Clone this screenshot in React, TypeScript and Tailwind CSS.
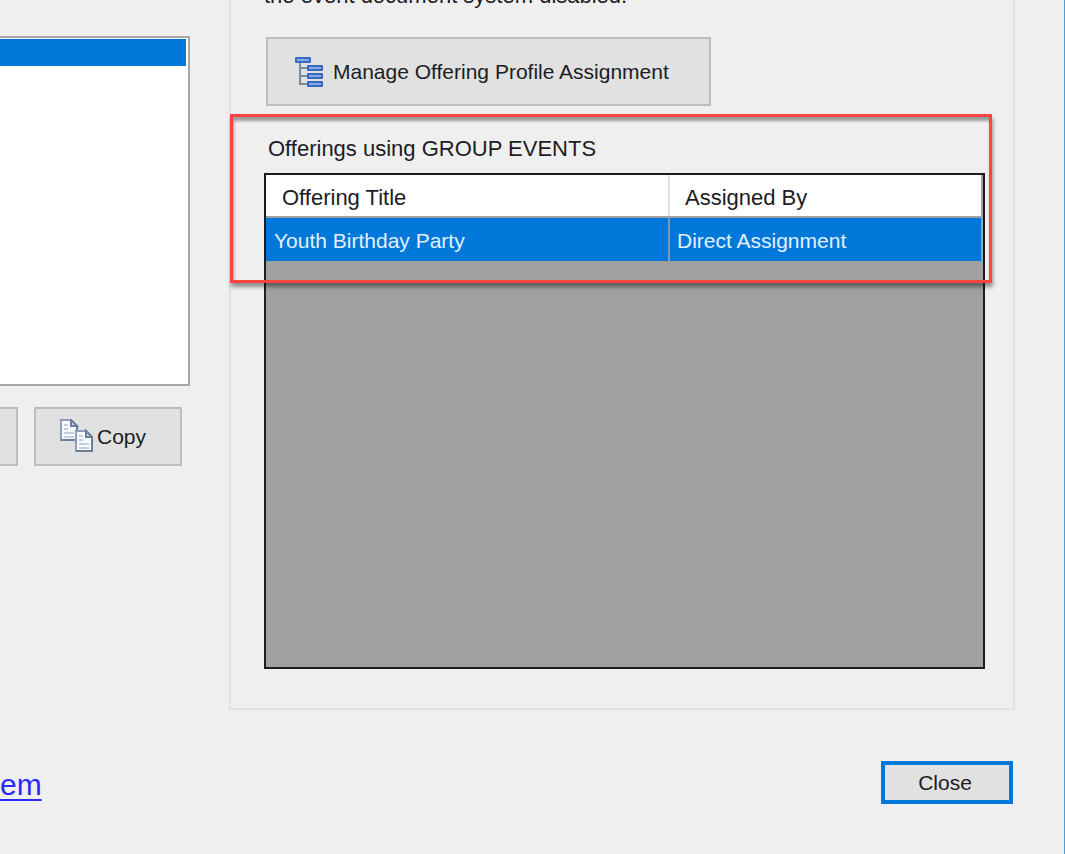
import clsx from 'clsx';

const font = "font-['Liberation_Sans',Arial,sans-serif]";

const offerings = [{ title: 'Youth Birthday Party', assignedBy: 'Direct Assignment' }];

const treeNodes = [
  { x: 0, y: 0 },
  { x: 12, y: 8 },
  { x: 12, y: 16 },
  { x: 12, y: 24 }
];

const TreeIcon = () => (
  <svg width="30" height="32" viewBox="0 0 30 32" fill="none" aria-hidden="true">
    <path d="M5 6V28H12M5 12H12M5 20H12" stroke="#7d8b99" strokeWidth="2" />
    {treeNodes.map((node) => (
      <g key={node.y}>
        <rect x={node.x} y={node.y + 1} width="16" height="6" rx="1" fill="#3a69c4" />
        <rect x={node.x + 2} y={node.y + 3} width="12" height="2" fill="#84aaea" />
      </g>
    ))}
  </svg>
);

const Page = ({ x, y }: { x: number; y: number }) => (
  <g transform={`translate(${x} ${y})`}>
    <path d="M1 1H11L17 7V21H1Z" fill="#f5f8fc" stroke="#8f9dbb" strokeWidth="2" />
    <path d="M17 7V21H1" stroke="#6b7f99" strokeWidth="2" />
    <path d="M11 1V7H17Z" fill="#dce4ee" stroke="#6b7f99" strokeWidth="2" />
    <path d="M4 6H8M4 10H8M4 14H14M4 18H14" stroke="#c3cddb" strokeWidth="2" />
  </g>
);

const CopyIcon = () => (
  <svg width="33" height="33" viewBox="0 0 33 33" fill="none" aria-hidden="true">
    <Page x={0} y={0} />
    <Page x={15} y={11} />
  </svg>
);

const App = () => {
  return (
    <main
      className={clsx(
        'min-h-screen overflow-hidden border-r border-[#4a9fe0] bg-[#efefef] text-[21px] leading-[30px] text-[#1c1c24]',
        font
      )}
    >
      <div className="flex">
        <section className="w-[190px] shrink-0 pt-9">
          <ul className="h-[350px] border-2 border-l-0 border-[#a3a6ac] bg-white pt-px pr-0.5">
            <li className="h-[27px] bg-[#0078d9]"></li>
          </ul>
          <div className="mt-[21px] flex gap-4">
            <button
              type="button"
              aria-label="New"
              className="h-[59px] w-[18px] border-2 border-l-0 border-[#bdbdbd] bg-[#e1e1e1]"
            ></button>
            <button
              type="button"
              className="flex h-[59px] w-[148px] items-center gap-1 border-2 border-[#bdbdbd] bg-[#e1e1e1] pb-0.5 pl-6"
            >
              <CopyIcon />
              <span className="pt-0.5">Copy</span>
            </button>
          </div>
        </section>

        <section className="relative mr-[49px] ml-[39px] flex-1 border-2 border-t-0 border-[#e2e2e2] px-[33px] pb-[39px]">
          <p className="-mt-[19px] text-[22px]">the event document system disabled.</p>
          <button
            type="button"
            className="mt-[26px] ml-0.5 flex h-[69px] items-center gap-2 border-2 border-[#bdbdbd] bg-[#e1e1e1] pr-10 pl-[27px]"
          >
            <TreeIcon />
            Manage Offering Profile Assignment
          </button>
          <h2 className="mt-7 ml-1 text-[22px]">Offerings using GROUP EVENTS</h2>
          <div className="mt-[9px] mr-[-5px] h-[496px] border-2 border-[#1c1c1c] bg-[#a0a0a0] pr-0.5">
            <table className="w-full table-fixed border-collapse text-left">
              <thead>
                <tr className="h-[42px] bg-white text-[22px] text-[#1c1c24]">
                  <th className="w-[403px] border-r-2 border-b-2 border-r-[#e2e2e2] border-b-[#a0a0a0] pt-1 pl-4 font-normal">
                    Offering Title
                  </th>
                  <th className="border-b-2 border-[#a0a0a0] pt-1 pl-[15px] font-normal">Assigned By</th>
                </tr>
              </thead>
              <tbody>
                {offerings.map((offering) => (
                  <tr key={offering.title} className="h-[44px] bg-[#0078d9] text-[#e4f0ff]">
                    <td className="border-r-2 border-[#8797a6] pt-0.5 pl-2">{offering.title}</td>
                    <td className="pt-0.5 pl-[7px]">{offering.assignedBy}</td>
                  </tr>
                ))}
              </tbody>
            </table>
          </div>
          <div className="pointer-events-none absolute top-[114px] right-[21px] -left-px h-[169px] border-3 border-[#ff4343] shadow-[1px_4px_4px_rgba(0,0,0,0.4),inset_1px_4px_3px_rgba(0,0,0,0.35)]"></div>
        </section>
      </div>

      <footer className="mt-[51px] flex items-start justify-between pr-[51px]">
        <a
          href="#system"
          className="mt-2 text-[30px] leading-8 text-[#2a2aff] underline decoration-2 underline-offset-4"
        >
          em
        </a>
        <button
          type="button"
          className="h-[43px] w-[132px] border-4 border-[#0078d9] bg-[#e1e1e1] pr-1 leading-[34px]"
        >
          Close
        </button>
      </footer>
    </main>
  );
};

export default App;
